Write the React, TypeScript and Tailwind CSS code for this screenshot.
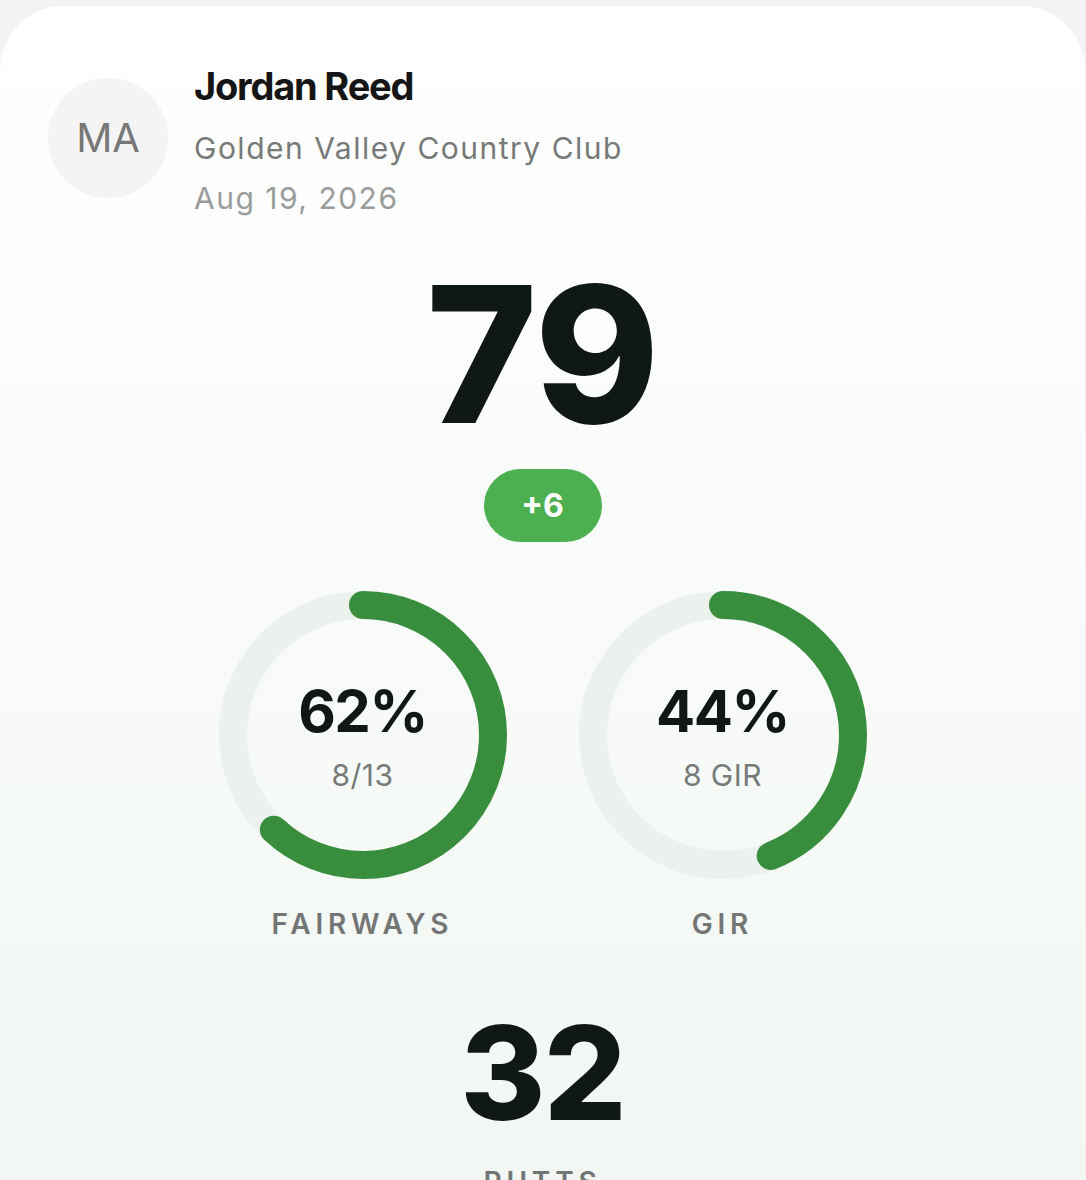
import React from "react";

function Ring({ pct, value, sub, label }: { pct: number; value: string; sub: string; label: string }) {
  const r = 130;
  const c = 2 * Math.PI * r;
  return (
    <div className="flex flex-col items-center">
      <div className="relative w-[288px] h-[288px]">
        <svg width="288" height="288" viewBox="0 0 288 288" className="absolute inset-0">
          <circle cx="144" cy="144" r={r} fill="none" stroke="#edf1ee" strokeWidth="28" />
          <circle
            cx="144"
            cy="144"
            r={r}
            fill="none"
            stroke="#388e3c"
            strokeWidth="28"
            strokeLinecap="round"
            strokeDasharray={`${(c * pct) / 100} ${c}`}
            transform="rotate(-90 144 144)"
          />
        </svg>
        <div className="absolute inset-0 flex flex-col items-center justify-center">
          <div className="text-[58px] font-bold leading-none text-[#101814] tracking-[-1.5px] mt-[2px]">{value}</div>
          <div className="text-[30px] leading-none text-[#767a78] mt-[20px] tracking-[0.5px]">{sub}</div>
        </div>
      </div>
      <div className="mt-[31px] text-[28px] font-semibold tracking-[4.8px] text-[#737675] leading-none">{label}</div>
    </div>
  );
}

export default function App() {
  return (
    <div className="h-[1180px] bg-[#f3f3f3] pt-[6px] overflow-hidden" style={{ fontFamily: "Inter, 'Noto Sans', sans-serif" }}>
      <div className="rounded-t-[64px] mr-[1px] bg-gradient-to-b from-white to-[#f2f7f3] h-[1174px] px-[48px] pt-[72px]">
        <div className="flex items-start gap-[26px]">
          <div className="w-[120px] h-[120px] rounded-full bg-[#f4f4f4] flex items-center justify-center text-[40px] text-[#777]">
            MA
          </div>
          <div className="flex flex-col mt-[-16px]">
            <div className="text-[38px] font-bold tracking-[-1.2px] text-[#151515] leading-[48px]">Jordan Reed</div>
            <div className="text-[30px] text-[#767a78] leading-[36px] mt-[20px] tracking-[1.5px]">Golden Valley Country Club</div>
            <div className="text-[30px] text-[#9a9c9b] leading-[36px] mt-[14px] tracking-[1.5px]">Aug 19, 2026</div>
          </div>
        </div>
        <div className="flex flex-col items-center mt-[44px]">
          <div className="text-[189px] font-extrabold leading-none text-[#101814] tracking-[-1px]">79</div>
          <div className="mt-[20px] w-[118px] h-[73px] rounded-full bg-[#4caf50] flex items-center justify-center text-[32px] font-bold text-white">
            +6
          </div>
        </div>
        <div className="flex justify-center gap-[72px] mt-[49px]">
          <Ring pct={62} value="62%" sub="8/13" label="FAIRWAYS" />
          <Ring pct={44} value="44%" sub="8 GIR" label="GIR" />
        </div>
        <div className="flex flex-col items-center mt-[70px]">
          <div className="text-[130px] font-extrabold leading-none text-[#101814] tracking-[-2px]">32</div>
          <div className="mt-[30px] text-[28px] font-semibold tracking-[4.8px] text-[#737675] leading-none">PUTTS</div>
        </div>
      </div>
    </div>
  );
}
